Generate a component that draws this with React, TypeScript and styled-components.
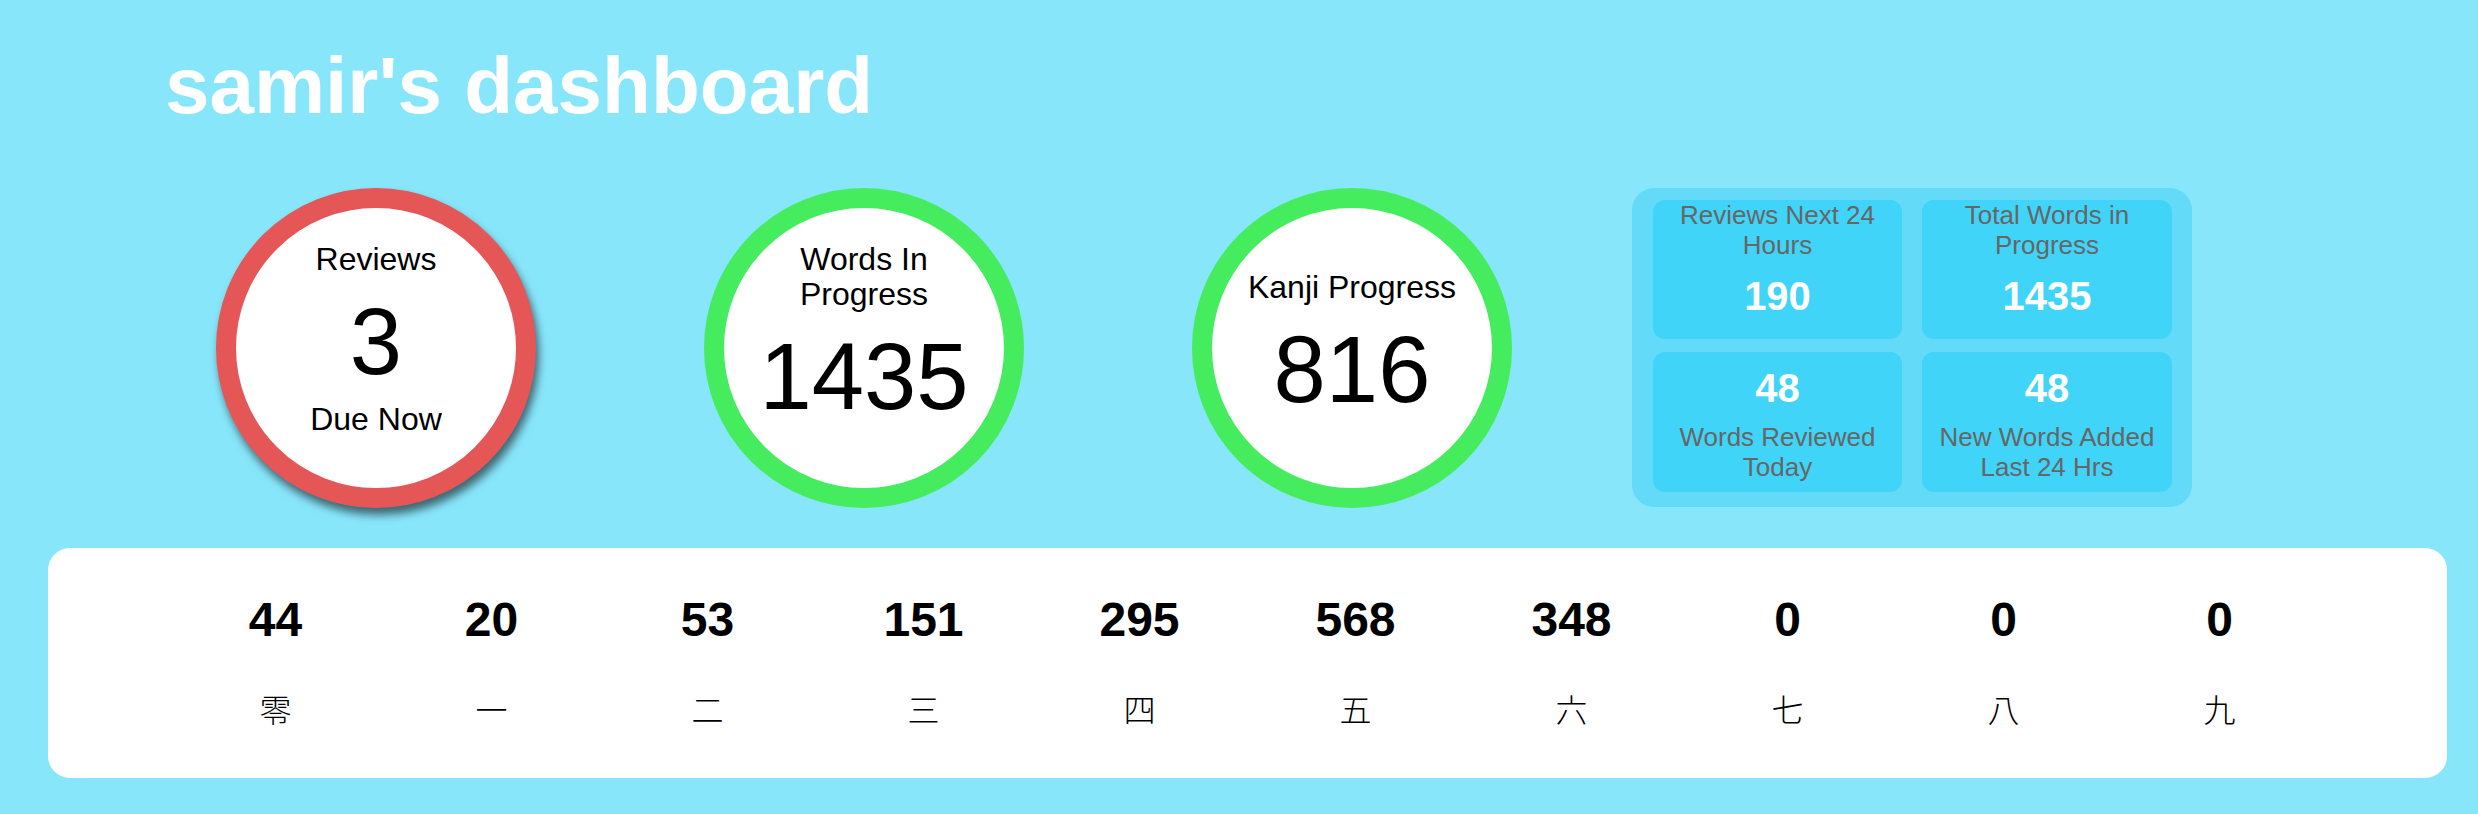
import styled, { createGlobalStyle } from 'styled-components';

const GlobalStyle = createGlobalStyle`
  html, body {
    margin: 0;
    padding: 0;
    background: #88e6fb;
  }
  body {
    font-family: "Liberation Sans", Arial, "Noto Sans CJK JP", sans-serif;
    min-height: 100vh;
  }
`;

const circles = [
  { label: 'Reviews', value: '3', footer: 'Due Now', ring: '#e55757', top: 34, shadow: true },
  { label: 'Words In Progress', value: '1435', ring: '#44ec5e', top: 34 },
  { label: 'Kanji Progress', value: '816', ring: '#44ec5e', top: 62 },
];

const tiles = [
  { label: 'Reviews Next 24 Hours', value: '190' },
  { label: 'Total Words in Progress', value: '1435' },
  { label: 'Words Reviewed Today', value: '48', numberFirst: true },
  { label: 'New Words Added Last 24 Hrs', value: '48', numberFirst: true },
];

const levels = [
  { count: 44, kanji: '零' },
  { count: 20, kanji: '一' },
  { count: 53, kanji: '二' },
  { count: 151, kanji: '三' },
  { count: 295, kanji: '四' },
  { count: 568, kanji: '五' },
  { count: 348, kanji: '六' },
  { count: 0, kanji: '七' },
  { count: 0, kanji: '八' },
  { count: 0, kanji: '九' },
];

export default function App() {
  return (
    <Page>
      <GlobalStyle />
      <Title>samir's dashboard</Title>
      <TopRow>
        <CircleGroup>
          {circles.map((c) => (
            <Circle key={c.label} $ring={c.ring} $top={c.top} $shadow={!!c.shadow}>
              <CircleLabel>{c.label}</CircleLabel>
              <CircleValue>{c.value}</CircleValue>
              {c.footer && <CircleFooter>{c.footer}</CircleFooter>}
            </Circle>
          ))}
        </CircleGroup>
        <StatsPanel>
          {tiles.map((t) => (
            <Tile key={t.label} $numberFirst={!!t.numberFirst}>
              {t.numberFirst && <TileValue>{t.value}</TileValue>}
              <TileLabel>{t.label}</TileLabel>
              {!t.numberFirst && <TileValue>{t.value}</TileValue>}
            </Tile>
          ))}
        </StatsPanel>
      </TopRow>
      <LevelCard>
        {levels.map((l) => (
          <LevelColumn key={l.kanji}>
            <LevelCount>{l.count}</LevelCount>
            <LevelKanji>{l.kanji}</LevelKanji>
          </LevelColumn>
        ))}
      </LevelCard>
    </Page>
  );
}

const Page = styled.div`
  padding: 41px 0 40px;
`;

const Title = styled.h1`
  margin: 0 0 0 165px;
  font-size: 80px;
  line-height: 90px;
  font-weight: bold;
  color: #ffffff;
`;

const TopRow = styled.div`
  display: flex;
  align-items: flex-start;
  margin-top: 57px;
  padding-left: 216px;
`;

const CircleGroup = styled.div`
  display: flex;
  gap: 168px;
`;

const Circle = styled.div<{ $ring: string; $top: number; $shadow: boolean }>`
  width: 320px;
  height: 320px;
  box-sizing: border-box;
  border-radius: 50%;
  border: 20px solid ${(p) => p.$ring};
  background: #ffffff;
  box-shadow: ${(p) => (p.$shadow ? '3px 7px 8px rgba(0, 0, 0, 0.55)' : 'none')};
  display: flex;
  flex-direction: column;
  align-items: center;
  padding-top: ${(p) => p.$top}px;
  text-align: center;
  color: #000000;
`;

const CircleLabel = styled.div`
  font-size: 32px;
  line-height: 35px;
  width: 240px;
`;

const CircleValue = styled.div`
  font-size: 94px;
  line-height: 100px;
  margin-top: 15px;
`;

const CircleFooter = styled.div`
  font-size: 32px;
  line-height: 35px;
  margin-top: 10px;
`;

const StatsPanel = styled.div`
  margin-left: 120px;
  width: 560px;
  height: 319px;
  box-sizing: border-box;
  padding: 12px 20px 15px 21px;
  background: #62daf8;
  border-radius: 22px;
  display: grid;
  grid-template-columns: 249px 250px;
  grid-template-rows: 139px 140px;
  column-gap: 20px;
  row-gap: 13px;
`;

const Tile = styled.div<{ $numberFirst: boolean }>`
  background: #40d4f8;
  border-radius: 12px;
  display: flex;
  flex-direction: column;
  align-items: center;
  justify-content: flex-start;
  padding-top: ${(p) => (p.$numberFirst ? '13px' : '0')};
  gap: ${(p) => (p.$numberFirst ? '11px' : '13px')};
  text-align: center;
`;

const TileLabel = styled.div`
  font-size: 26px;
  line-height: 30px;
  color: #666666;
`;

const TileValue = styled.div`
  font-size: 40px;
  line-height: 46px;
  font-weight: bold;
  color: #ffffff;
`;

const LevelCard = styled.div`
  margin: 40px 31px 0 48px;
  height: 230px;
  box-sizing: border-box;
  padding-top: 44px;
  background: #ffffff;
  border-radius: 22px;
  display: flex;
  justify-content: center;
`;

const LevelColumn = styled.div`
  width: 216px;
  display: flex;
  flex-direction: column;
  align-items: center;
  gap: 41px;
`;

const LevelCount = styled.div`
  font-size: 48px;
  line-height: 55px;
  font-weight: bold;
  color: #000000;
`;

const LevelKanji = styled.div`
  font-family: "Noto Sans CJK JP", sans-serif;
  font-size: 32px;
  line-height: 40px;
  font-weight: 300;
  color: #000000;
`;
